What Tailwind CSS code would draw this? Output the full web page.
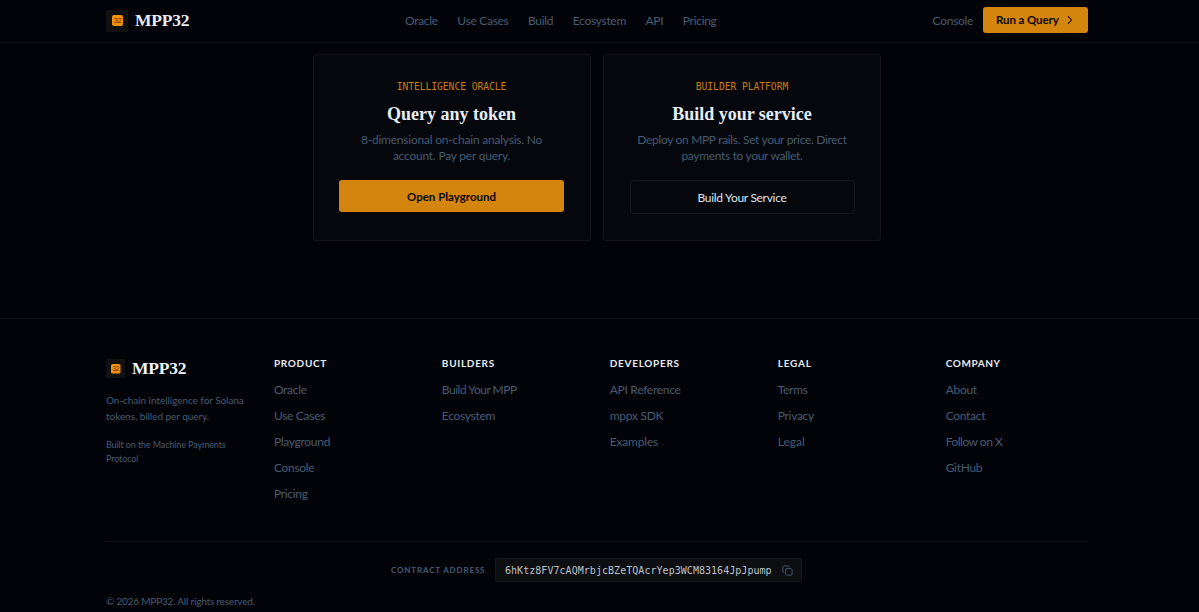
<!DOCTYPE html>
<html lang="en">

<head>
    <meta charset="UTF-8">
    <meta name="viewport" content="width=device-width, initial-scale=1.0">
    <title>MPP32</title>
    <script src="https://cdn.jsdelivr.net/npm/@tailwindcss/browser@4"></script>
</head>

<body class="bg-[#020308] h-[612px] overflow-hidden font-['Lato',sans-serif] text-[12px] tracking-[-0.3px] text-[#475c72]">
    <!-- Navbar -->
    <header class="h-[43px] border-b border-[#0f1217] bg-[#020308]">
        <nav class="w-[982px] ml-[106px] h-[41px] flex items-center">
            <a href="#" class="flex items-center gap-[7px] w-[299px]">
                <svg class="w-[22px] h-[22px]" viewBox="0 0 22 22">
                    <rect width="22" height="22" rx="1" fill="#111111" />
                    <rect x="6" y="5" width="11" height="11" rx="2" fill="#f0900f" />
                    <text x="11.5" y="13.3" font-size="7.5" font-family="Liberation Sans" text-anchor="middle" fill="#5a3005">32</text>
                </svg>
                <span class="font-['Liberation_Serif',serif] font-bold text-[17.5px] tracking-[-0.2px] text-[#e6ebf3]">MPP32</span>
            </a>
            <ul class="flex gap-[19.5px]">
                <li><a href="#">Oracle</a></li>
                <li><a href="#">Use Cases</a></li>
                <li><a href="#">Build</a></li>
                <li><a href="#">Ecosystem</a></li>
                <li><a href="#">API</a></li>
                <li><a href="#">Pricing</a></li>
            </ul>
            <div class="ml-auto flex items-center gap-[10px]">
                <a href="#">Console</a>
                <a href="#" class="mb-[2px] w-[105px] h-[26px] pl-[13px] rounded-[3px] bg-[#d4850d] text-[#080604] font-bold text-[11.5px] tracking-[-0.1px] flex items-center gap-[6px]">
                    <span class="pt-px">Run a Query</span>
                    <svg class="w-[10px] h-[10px]" viewBox="0 0 24 24" fill="none" stroke="currentColor" stroke-width="2.5" stroke-linecap="round" stroke-linejoin="round"><path d="m8 4 8 8-8 8" /></svg>
                </a>
            </div>
        </nav>
    </header>

    <!-- Call to action cards -->
    <section class="h-[275px] pt-[11px] pl-[312.5px] flex items-start gap-[12.5px] text-center">
        <div class="w-[278px] h-[186.5px] border border-[#11151b] rounded-[3px] bg-[#05070c] px-[25.5px] pt-[25px]">
            <p class="font-['DejaVu_Sans_Mono',monospace] text-[9.6px] leading-[14px] tracking-normal text-[#c87d10]">INTELLIGENCE ORACLE</p>
            <h3 class="mt-[9px] font-['Liberation_Serif',serif] font-bold text-[18px] leading-[22px] tracking-normal text-[#e8eef5]">Query any token</h3>
            <p class="mt-[7px] leading-[16px] tracking-[-0.22px]">8-dimensional on-chain analysis. No<br>account. Pay per query.</p>
            <a href="#" class="mt-[16px] h-[32px] pt-px rounded-[3px] bg-[#d4850d] text-[#080604] font-bold text-[11.5px] tracking-normal flex items-center justify-center">Open Playground</a>
        </div>
        <div class="w-[278px] h-[186.5px] border border-[#11151b] rounded-[3px] bg-[#05070c] px-[25.5px] pt-[25px]">
            <p class="font-['DejaVu_Sans_Mono',monospace] text-[9.6px] leading-[14px] tracking-normal text-[#c87d10]">BUILDER PLATFORM</p>
            <h3 class="mt-[9px] font-['Liberation_Serif',serif] font-bold text-[18px] leading-[22px] tracking-normal text-[#e8eef5]">Build your service</h3>
            <p class="mt-[7px] leading-[16px] tracking-[-0.32px]">Deploy on MPP rails. Set your price. Direct<br>payments to your wallet.</p>
            <a href="#" class="mt-[16px] h-[34px] pt-px border border-[#131820] rounded-[3px] text-[#dfe6ee] flex items-center justify-center">Build Your Service</a>
        </div>
    </section>

    <!-- Footer -->
    <footer class="border-t border-[#0f1218] pt-[38px] px-[106px]">
        <div class="w-[982px] h-[184px] grid grid-cols-6 gap-x-[25.6px]">
            <div>
                <a href="#" class="flex items-center gap-[7px] h-[20px] mt-px">
                    <svg class="w-[19px] h-[19px]" viewBox="0 0 19 19">
                        <rect width="19" height="19" rx="1" fill="#111111" />
                        <rect x="5" y="5" width="9.5" height="9.5" rx="1.5" fill="#f0900f" />
                        <text x="9.8" y="12.2" font-size="6.5" font-family="Liberation Sans" text-anchor="middle" fill="#5a3005">32</text>
                    </svg>
                    <span class="font-['Liberation_Serif',serif] font-bold text-[17.5px] tracking-[-0.2px] text-[#f0f4f8]">MPP32</span>
                </a>
                <p class="mt-[14px] text-[10px] leading-[16px] tracking-[-0.05px] whitespace-nowrap">On-chain intelligence for Solana<br>tokens, billed per query.</p>
                <p class="mt-[14px] text-[9px] leading-[14px] tracking-[-0.12px] whitespace-nowrap">Built on the Machine Payments<br>Protocol</p>
            </div>
            <div>
                <h4 class="font-bold text-[10px] leading-[13px] tracking-[0.7px] text-[#e6ebf2]">PRODUCT</h4>
                <ul class="mt-[7px] leading-[26px]">
                    <li><a href="#">Oracle</a></li>
                    <li><a href="#">Use Cases</a></li>
                    <li><a href="#">Playground</a></li>
                    <li><a href="#">Console</a></li>
                    <li><a href="#">Pricing</a></li>
                </ul>
            </div>
            <div>
                <h4 class="font-bold text-[10px] leading-[13px] tracking-[0.7px] text-[#e6ebf2]">BUILDERS</h4>
                <ul class="mt-[7px] leading-[26px]">
                    <li class="tracking-[-0.5px]"><a href="#">Build Your MPP</a></li>
                    <li><a href="#">Ecosystem</a></li>
                </ul>
            </div>
            <div>
                <h4 class="font-bold text-[10px] leading-[13px] tracking-[0.7px] text-[#e6ebf2]">DEVELOPERS</h4>
                <ul class="mt-[7px] leading-[26px]">
                    <li><a href="#">API Reference</a></li>
                    <li><a href="#">mppx SDK</a></li>
                    <li class="tracking-[-0.2px]"><a href="#">Examples</a></li>
                </ul>
            </div>
            <div>
                <h4 class="font-bold text-[10px] leading-[13px] tracking-[0.8px] text-[#e6ebf2]">LEGAL</h4>
                <ul class="mt-[7px] leading-[26px]">
                    <li><a href="#">Terms</a></li>
                    <li><a href="#">Privacy</a></li>
                    <li class="tracking-normal"><a href="#">Legal</a></li>
                </ul>
            </div>
            <div>
                <h4 class="font-bold text-[10px] leading-[13px] tracking-[0.6px] text-[#e6ebf2]">COMPANY</h4>
                <ul class="mt-[7px] leading-[26px]">
                    <li><a href="#">About</a></li>
                    <li><a href="#">Contact</a></li>
                    <li class="tracking-[-0.5px]"><a href="#">Follow on X</a></li>
                    <li><a href="#">GitHub</a></li>
                </ul>
            </div>
        </div>

        <!-- Contract address -->
        <div class="w-[982px] border-t border-[#0f1218] pt-[16px]">
            <div class="ml-[285px] flex items-center">
                <span class="w-[104px] font-bold text-[8px] tracking-[0.84px]">CONTRACT ADDRESS</span>
                <div class="w-[307px] h-[24px] pl-[9px] border border-[#15181c] rounded-[2px] bg-[#0c0e11] flex items-center gap-[10px]">
                    <code class="font-['DejaVu_Sans_Mono',monospace] text-[10px] tracking-[0.04px] text-[#bcc3cc] whitespace-nowrap">6hKtz8FV7cAQMrbjcBZeTQAcrYep3WCM83164JpJpump</code>
                    <svg class="w-[11px] h-[11px]" viewBox="0 0 24 24" fill="none" stroke="currentColor" stroke-width="2" stroke-linecap="round" stroke-linejoin="round"><rect x="8" y="8" width="14" height="14" rx="2" /><path d="M4 16c-1.1 0-2-.9-2-2V4c0-1.1.9-2 2-2h10c1.1 0 2 .9 2 2" /></svg>
                </div>
            </div>
            <p class="mt-[12px] text-[10px] leading-[14px] tracking-[-0.2px]">© 2026 MPP32. All rights reserved.</p>
        </div>
    </footer>
</body>

</html>
